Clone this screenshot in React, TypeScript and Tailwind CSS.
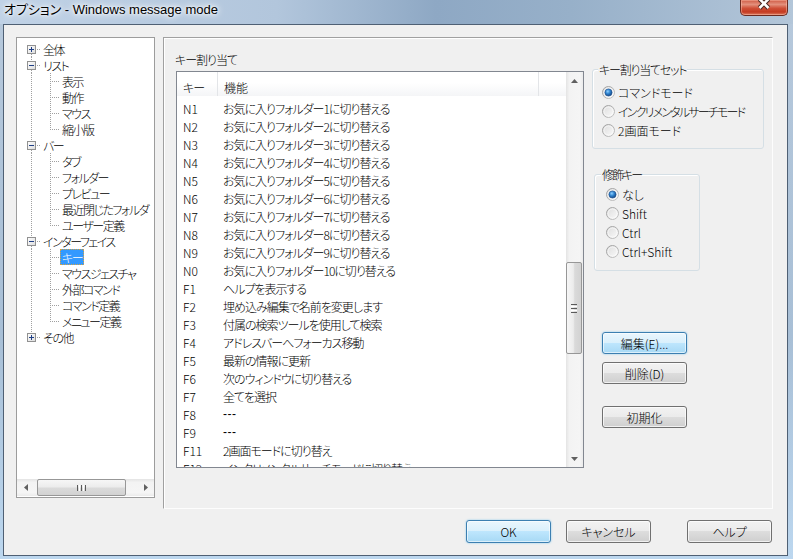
import React from 'react';

type Node = { label: string; level: 0 | 1; exp?: '+' | '-'; lastChild?: boolean; selected?: boolean };

const tree: Node[] = [
  { label: '全体', level: 0, exp: '+' },
  { label: 'リスト', level: 0, exp: '-' },
  { label: '表示', level: 1 },
  { label: '動作', level: 1 },
  { label: 'マウス', level: 1 },
  { label: '縮小版', level: 1, lastChild: true },
  { label: 'バー', level: 0, exp: '-' },
  { label: 'タブ', level: 1 },
  { label: 'フォルダー', level: 1 },
  { label: 'プレビュー', level: 1 },
  { label: '最近閉じたフォルダ', level: 1 },
  { label: 'ユーザー定義', level: 1, lastChild: true },
  { label: 'インターフェイス', level: 0, exp: '-' },
  { label: 'キー', level: 1, selected: true },
  { label: 'マウスジェスチャ', level: 1 },
  { label: '外部コマンド', level: 1 },
  { label: 'コマンド定義', level: 1 },
  { label: 'メニュー定義', level: 1, lastChild: true },
  { label: 'その他', level: 0, exp: '+' },
];

const rows: [string, string][] = [
  ['N1', 'お気に入りフォルダー1に切り替える'],
  ['N2', 'お気に入りフォルダー2に切り替える'],
  ['N3', 'お気に入りフォルダー3に切り替える'],
  ['N4', 'お気に入りフォルダー4に切り替える'],
  ['N5', 'お気に入りフォルダー5に切り替える'],
  ['N6', 'お気に入りフォルダー6に切り替える'],
  ['N7', 'お気に入りフォルダー7に切り替える'],
  ['N8', 'お気に入りフォルダー8に切り替える'],
  ['N9', 'お気に入りフォルダー9に切り替える'],
  ['N0', 'お気に入りフォルダー10に切り替える'],
  ['F1', 'ヘルプを表示する'],
  ['F2', '埋め込み編集で名前を変更します'],
  ['F3', '付属の検索ツールを使用して検索'],
  ['F4', 'アドレスバーへフォーカス移動'],
  ['F5', '最新の情報に更新'],
  ['F6', '次のウィンドウに切り替える'],
  ['F7', '全てを選択'],
  ['F8', '---'],
  ['F9', '---'],
  ['F11', '2画面モードに切り替え'],
  ['F12', 'インクリメンタルサーチモードに切り替え'],
];

const dot = { stroke: '#a0a0a0', strokeDasharray: '1 1', strokeWidth: 1 };

function TreeLines({ n, i }: { n: Node; i: number }) {
  if (n.level === 0) {
    const first = i === 0;
    const last = i === tree.length - 1;
    return (
      <svg width={24} height={16} className="shrink-0">
        <defs>
          <linearGradient id="tbx" x1="0" y1="0" x2="1" y2="1">
            <stop offset="0" stopColor="#ffffff" />
            <stop offset="1" stopColor="#dcdcdc" />
          </linearGradient>
        </defs>
        {!first && <line x1={14.5} y1={0} x2={14.5} y2={4} {...dot} />}
        {!last && <line x1={14.5} y1={13} x2={14.5} y2={16} {...dot} />}
        <line x1={20} y1={8.5} x2={24} y2={8.5} {...dot} />
        <rect x={10.5} y={4.5} width={8} height={8} fill="url(#tbx)" stroke="#919191" />
        <line x1={12} y1={8.5} x2={17} y2={8.5} stroke="#1f3f86" />
        {n.exp === '+' && <line x1={14.5} y1={6} x2={14.5} y2={11} stroke="#1f3f86" />}
      </svg>
    );
  }
  return (
    <svg width={43} height={16} className="shrink-0">
      <line x1={14.5} y1={0} x2={14.5} y2={16} {...dot} />
      <line x1={33.5} y1={0} x2={33.5} y2={n.lastChild ? 9 : 16} {...dot} />
      <line x1={35} y1={8.5} x2={42} y2={8.5} {...dot} />
    </svg>
  );
}

function Tree() {
  return (
    <div className="w-[139px] h-[461px] shrink-0 border border-[#9c9c9c] bg-white flex flex-col">
      <div className="flex-1 overflow-hidden pt-[3px]">
        {tree.map((n, i) => (
          <div key={i} className="h-[16px] flex items-center whitespace-nowrap">
            <TreeLines n={n} i={i} />
            {n.selected ? (
              <span className="h-[16px] px-[1px] bg-[#3399ff] text-white border border-dotted border-[#d9a441] flex items-center tracking-[-1.5px]">
                {n.label}
              </span>
            ) : (
              <span className="px-[2px] tracking-[-1.5px]">{n.label}</span>
            )}
          </div>
        ))}
      </div>
      <div className="h-[17px] flex bg-[linear-gradient(180deg,#e4e4e4,#f3f3f3_20%,#f5f5f5_80%,#ebebeb)]">
        <div className="w-[17px] flex items-center justify-center">
          <svg width="4" height="7">
            <path d="M0 3.5 L4 0 L4 7Z" fill="#606060" />
          </svg>
        </div>
        <div className="flex-1 flex">
          <div className="ml-[3px] w-[89px] h-[17px] rounded-[2px] border border-[#979797] bg-[linear-gradient(180deg,#f6f6f6,#ececec_45%,#dadada_55%,#d2d2d2)] flex items-center justify-center gap-[1px]">
            <div className="w-[1px] h-[6px] bg-[#5a5a5a]" />
            <div className="w-[1px] h-[6px] bg-[#ffffff]" />
            <div className="w-[1px] h-[6px] bg-[#5a5a5a]" />
            <div className="w-[1px] h-[6px] bg-[#ffffff]" />
            <div className="w-[1px] h-[6px] bg-[#5a5a5a]" />
          </div>
        </div>
        <div className="w-[17px] flex items-center justify-center">
          <svg width="4" height="7">
            <path d="M4 3.5 L0 0 L0 7Z" fill="#606060" />
          </svg>
        </div>
      </div>
      <div className="h-[1px]" />
    </div>
  );
}

function Radio({ checked }: { checked: boolean }) {
  return (
    <svg width="13" height="13" viewBox="0 0 13 13" className="shrink-0">
      <defs>
        <linearGradient id="rring" x1="0" y1="0" x2="1" y2="1">
          <stop offset="0" stopColor="#9a9a9a" />
          <stop offset="1" stopColor="#c6c6c6" />
        </linearGradient>
        <linearGradient id="rfill" x1="0" y1="0" x2="1" y2="1">
          <stop offset="0" stopColor="#dcdcdc" />
          <stop offset="1" stopColor="#fbfbfb" />
        </linearGradient>
        <radialGradient id="rdot" cx="0.4" cy="0.35" r="0.65">
          <stop offset="0" stopColor="#8fd0ff" />
          <stop offset="0.5" stopColor="#2f83cf" />
          <stop offset="1" stopColor="#174a86" />
        </radialGradient>
      </defs>
      <circle cx="6.5" cy="6.5" r="6" fill="url(#rfill)" stroke="url(#rring)" />
      <circle cx="6.5" cy="6.5" r="4.5" fill="none" stroke="#ffffff" strokeOpacity="0.5" />
      {checked && <circle cx="6.5" cy="6.5" r="3.6" fill="url(#rdot)" stroke="#1c4f8e" strokeWidth="0.6" />}
    </svg>
  );
}

function Group({
  title,
  className,
  contentClass,
  titleClass,
  children,
}: {
  title: string;
  className: string;
  contentClass: string;
  titleClass: string;
  children: React.ReactNode;
}) {
  return (
    <div className={`relative border border-[#d5dfe5] rounded-[3px] shadow-[inset_1px_1px_0_#ffffff] ${className}`}>
      <span className={`absolute top-[-8px] px-[1px] bg-[#f0f0f0] leading-[15px] whitespace-nowrap ${titleClass}`}>{title}</span>
      <div className={contentClass}>{children}</div>
    </div>
  );
}

function Btn({ children, def, className }: { children: React.ReactNode; def?: boolean; className: string }) {
  return (
    <div
      className={`flex items-center justify-center rounded-[3px] border ${
        def
          ? 'border-[#3c7fb1] bg-[linear-gradient(180deg,#eaf6fd_0%,#d9f0fc_50%,#bee6fd_50%,#a7d9f5_100%)] shadow-[inset_0_0_0_1px_rgba(255,255,255,0.6),0_0_2px_#7ec4ec]'
          : 'border-[#707070] bg-[linear-gradient(180deg,#f2f2f2_0%,#ebebeb_50%,#dddddd_50%,#cfcfcf_100%)] shadow-[inset_0_0_0_1px_rgba(255,255,255,0.7)]'
      } ${className}`}
    >
      {children}
    </div>
  );
}

function ListView() {
  return (
    <div className="w-[408px] h-[397px] border border-[#828790] bg-white flex">
      <div className="w-[389px] flex flex-col overflow-hidden">
        <div className="h-[24px] shrink-0 flex bg-[linear-gradient(180deg,#ffffff_0%,#ffffff_45%,#f4f5f7_100%)]">
          <div className="w-[40px] pl-[6px] pt-[8px] tracking-[-1px]">キー</div>
          <div className="w-[1px] bg-[#e3e5e8]" />
          <div className="w-[320px] pl-[6px] pt-[8px]">機能</div>
          <div className="w-[1px] bg-[#e3e5e8]" />
          <div className="flex-1" />
        </div>
        <div className="flex-1 overflow-hidden pt-[3px]">
          {rows.map(([k, f]) => (
            <div key={k} className="h-[18px] flex items-center whitespace-nowrap">
              <div className="w-[41px] pl-[6px]">{k}</div>
              <div className={f === '---' ? 'pl-[5px] font-[Liberation_Sans] tracking-[0.5px]' : 'pl-[5px] tracking-[-1px]'}>{f}</div>
            </div>
          ))}
        </div>
      </div>
      <div className="w-[17px] flex flex-col bg-[linear-gradient(90deg,#e4e4e4,#f3f3f3_20%,#f5f5f5_80%,#ebebeb)]">
        <div className="h-[17px] flex items-center justify-center">
          <svg width="7" height="4">
            <path d="M3.5 0 L7 4 L0 4Z" fill="#606060" />
          </svg>
        </div>
        <div className="flex-1 flex flex-col">
          <div className="h-[173px]" />
          <div className="h-[92px] w-[16px] rounded-[2px] border border-[#979797] bg-[linear-gradient(90deg,#f6f6f6,#ececec_45%,#dadada_55%,#d2d2d2)] flex flex-col items-center justify-center gap-[1px]">
            <div className="h-[1px] w-[6px] bg-[#5a5a5a]" />
            <div className="h-[1px] w-[6px] bg-[#ffffff]" />
            <div className="h-[1px] w-[6px] bg-[#5a5a5a]" />
            <div className="h-[1px] w-[6px] bg-[#ffffff]" />
            <div className="h-[1px] w-[6px] bg-[#5a5a5a]" />
          </div>
        </div>
        <div className="h-[17px] flex items-center justify-center">
          <svg width="7" height="4">
            <path d="M0 0 L7 0 L3.5 4Z" fill="#606060" />
          </svg>
        </div>
      </div>
    </div>
  );
}

const set1: [string, boolean, string][] = [
  ['コマンドモード', true, ''],
  ['インクリメンタルサーチモード', false, 'tracking-[-1.8px]'],
  ['2画面モード', false, ''],
];
const set2: [string, boolean][] = [
  ['なし', true],
  ['Shift', false],
  ['Ctrl', false],
  ['Ctrl+Shift', false],
];

function Panel() {
  return (
    <div className="ml-[8px] w-[610px] h-[472px] shrink-0 border border-t-[#a0a0a0] border-l-[#a0a0a0] border-r-[#fdfdfd] border-b-[#fdfdfd] shadow-[inset_1px_1px_0_#ffffff] flex">
      <div className="pl-[12px] flex flex-col">
        <div className="pt-[14px] mb-[4px] -ml-[1px] leading-[15px] tracking-[-1px]">キー割り当て</div>
        <ListView />
      </div>
      <div className="ml-[8px] flex flex-col">
        <Group
          title="キー割り当てセット"
          className="mt-[31px] w-[172px] h-[80px]"
          titleClass="left-[5px] tracking-[-1.2px]"
          contentClass="pt-[13px] pl-[9px]"
        >
          {set1.map(([t, c, tr]) => (
            <div key={t} className="h-[19px] flex items-center gap-[3px] whitespace-nowrap">
              <Radio checked={c} />
              <span className={tr}>{t}</span>
            </div>
          ))}
        </Group>
        <Group
          title="修飾キー"
          className="mt-[25px] ml-[2px] w-[106px] h-[97px]"
          titleClass="left-[6px] tracking-[-2px]"
          contentClass="pt-[10px] pl-[11px]"
        >
          {set2.map(([t, c]) => (
            <div key={t} className="h-[19px] flex items-center gap-[3px] whitespace-nowrap">
              <Radio checked={c} />
              <span>{t}</span>
            </div>
          ))}
        </Group>
        <Btn def className="mt-[61px] ml-[10px] w-[85px] h-[22px]">
          編集(E)...
        </Btn>
        <Btn className="mt-[8px] ml-[10px] w-[85px] h-[22px]">削除(D)</Btn>
        <Btn className="mt-[22px] ml-[10px] w-[85px] h-[22px]">初期化</Btn>
      </div>
    </div>
  );
}

function CloseButton() {
  return (
    <div className="mr-[5px] w-[48px] h-[16px] overflow-hidden rounded-b-[5px] border border-t-0 border-[#6b2a20] bg-[linear-gradient(180deg,#cf5a44_0%,#e38f7b_30%,#cf4f37_55%,#c43a21_80%,#dc7d62_100%)] shadow-[inset_0_0_0_1px_rgba(255,200,180,0.45)] flex justify-center">
      <svg width="14" height="12" viewBox="0 0 14 12" className="-mt-[2px] shrink-0">
        <path d="M2.5 1 L11.5 10 M11.5 1 L2.5 10" stroke="#4a2a24" strokeWidth="4.6" />
        <path d="M2.5 1 L11.5 10 M11.5 1 L2.5 10" stroke="#ffffff" strokeWidth="2.6" />
      </svg>
    </div>
  );
}

export default function App() {
  return (
    <div className="w-[793px] h-[559px] overflow-hidden flex flex-col bg-[linear-gradient(180deg,#b7c9dc,#a8bfd6_60%,#bcd7ef)] text-black font-['Noto_Sans_CJK_JP','Liberation_Sans',sans-serif] [font-feature-settings:'palt'] font-light text-[12px] leading-[15px]">
      <div className="h-[24px] shrink-0 flex items-start justify-between bg-[linear-gradient(90deg,#c0d2e6_0%,#b2c6dc_35%,#8ea8c4_55%,#97b0c9_72%,#b3c6d9_100%)]">
        <div className="pl-[4px] pt-[1px] text-[13px] leading-[17px] whitespace-nowrap font-['Liberation_Sans','Noto_Sans_CJK_JP',sans-serif] font-normal [text-shadow:0_0_6px_#fff,0_0_3px_#fff,0_0_10px_#fff]">
          オプション - Windows message mode
        </div>
        <CloseButton />
      </div>
      <div className="ml-[3px] w-[785px] h-[532px] shrink-0 border border-[#4f6074] bg-[#f0f0f0] flex flex-col">
        <div className="flex pl-[12px] pt-[12px]">
          <Tree />
          <Panel />
        </div>
        <div className="flex justify-end pr-[15px] mt-[11px]">
          <Btn def className="w-[85px] h-[23px]">
            OK
          </Btn>
          <Btn className="ml-[15px] w-[85px] h-[23px]">キャンセル</Btn>
          <Btn className="ml-[36px] w-[85px] h-[23px]">ヘルプ</Btn>
        </div>
      </div>
    </div>
  );
}
